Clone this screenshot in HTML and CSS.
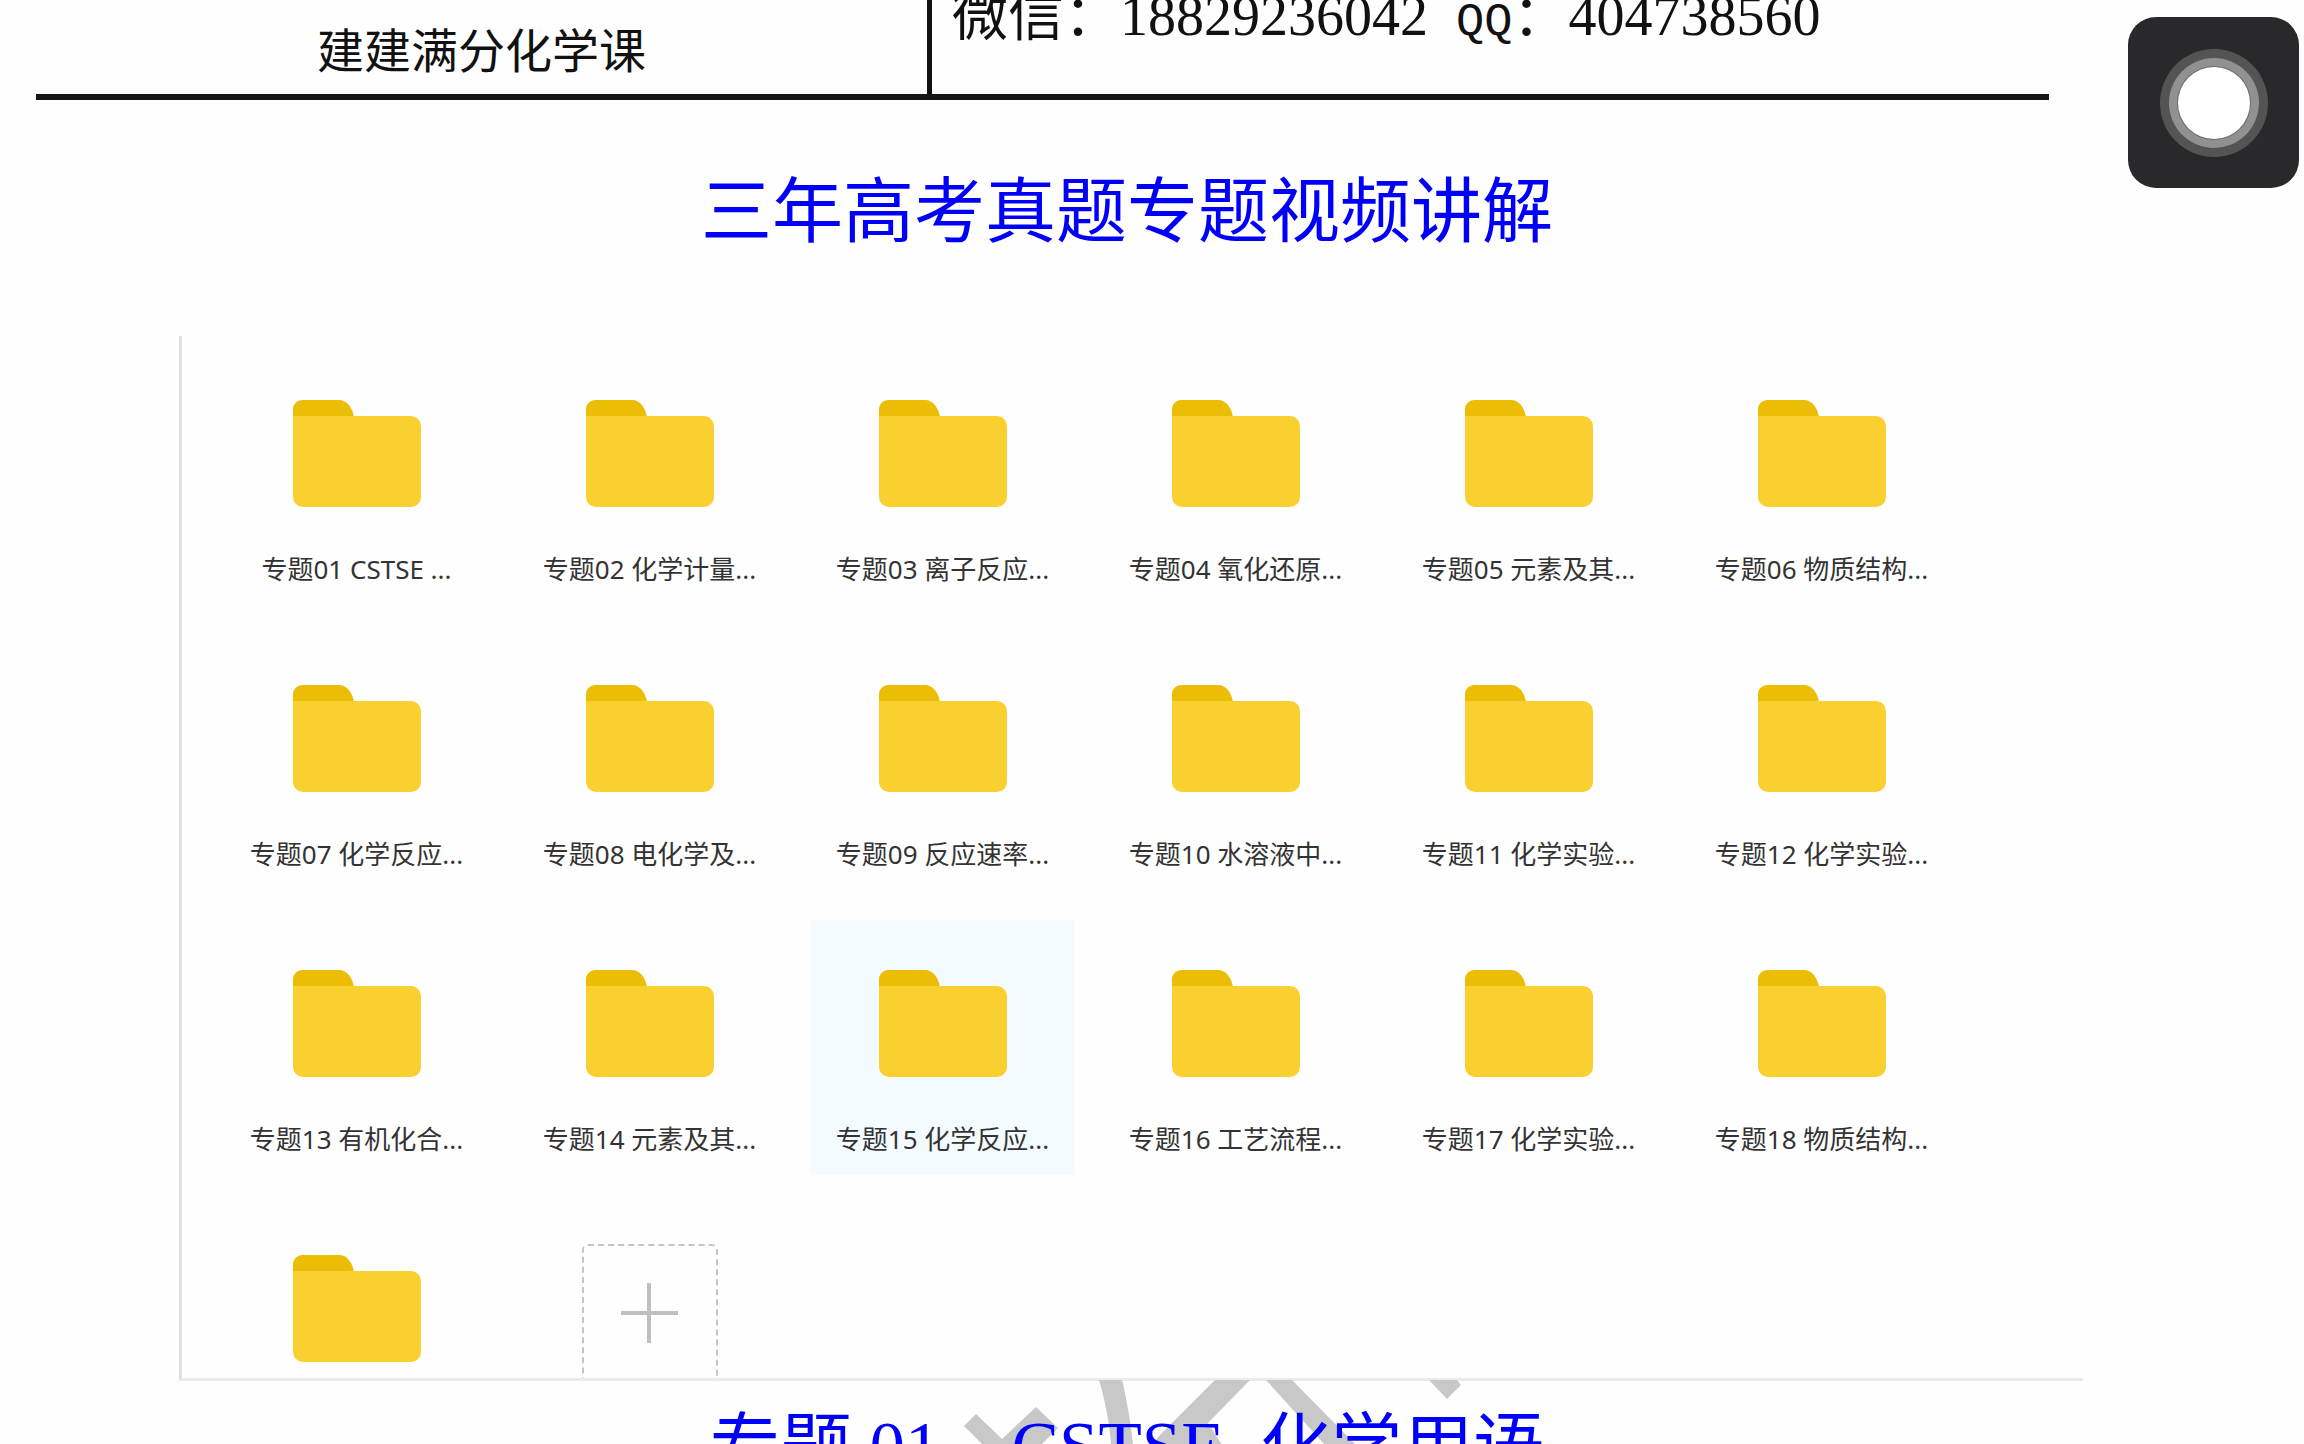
FILE: index.html
```html
<!DOCTYPE html>
<html lang="zh-CN">
<head>
<meta charset="utf-8">
<title>三年高考真题专题视频讲解</title>
<link rel="stylesheet" href="styles.css">
</head>
<body>
<svg class="symbols" aria-hidden="true">
  <symbol id="folder" viewBox="0 0 128 107">
    <path fill="#ebbd05" d="M0 24V9a9 9 0 0 1 9-9h37c8 0 14 8 15 18v6z"/>
    <path fill="#f9d030" d="M0 16h118a10 10 0 0 1 10 10v71a10 10 0 0 1-10 10H10a10 10 0 0 1-10-10z"/>
  </symbol>
</svg>
<div class="viewer">
  <header class="letterhead">
    <div class="course">建建满分化学课</div>
    <div class="contact">微信：18829236042  <span class="latin">QQ</span>：404738560</div>
  </header>
  <main class="page">
    <h1 class="title">三年高考真题专题视频讲解</h1>
    <section class="files">
      <button class="file"><svg class="icon"><use href="#folder"/></svg><span class="name">专题01 CSTSE ...</span></button>
      <button class="file"><svg class="icon"><use href="#folder"/></svg><span class="name">专题02 化学计量...</span></button>
      <button class="file"><svg class="icon"><use href="#folder"/></svg><span class="name">专题03 离子反应...</span></button>
      <button class="file"><svg class="icon"><use href="#folder"/></svg><span class="name">专题04 氧化还原...</span></button>
      <button class="file"><svg class="icon"><use href="#folder"/></svg><span class="name">专题05 元素及其...</span></button>
      <button class="file"><svg class="icon"><use href="#folder"/></svg><span class="name">专题06 物质结构...</span></button>
      <button class="file"><svg class="icon"><use href="#folder"/></svg><span class="name">专题07 化学反应...</span></button>
      <button class="file"><svg class="icon"><use href="#folder"/></svg><span class="name">专题08 电化学及...</span></button>
      <button class="file"><svg class="icon"><use href="#folder"/></svg><span class="name">专题09 反应速率...</span></button>
      <button class="file"><svg class="icon"><use href="#folder"/></svg><span class="name">专题10 水溶液中...</span></button>
      <button class="file"><svg class="icon"><use href="#folder"/></svg><span class="name">专题11 化学实验...</span></button>
      <button class="file"><svg class="icon"><use href="#folder"/></svg><span class="name">专题12 化学实验...</span></button>
      <button class="file"><svg class="icon"><use href="#folder"/></svg><span class="name">专题13 有机化合...</span></button>
      <button class="file"><svg class="icon"><use href="#folder"/></svg><span class="name">专题14 元素及其...</span></button>
      <button class="file selected"><svg class="icon"><use href="#folder"/></svg><span class="name">专题15 化学反应...</span></button>
      <button class="file"><svg class="icon"><use href="#folder"/></svg><span class="name">专题16 工艺流程...</span></button>
      <button class="file"><svg class="icon"><use href="#folder"/></svg><span class="name">专题17 化学实验...</span></button>
      <button class="file"><svg class="icon"><use href="#folder"/></svg><span class="name">专题18 物质结构...</span></button>
      <button class="file last" aria-label="文件夹"><svg class="icon"><use href="#folder"/></svg></button>
      <div class="slot">
        <button class="add" aria-label="新建">
          <svg class="plus" viewBox="0 0 57 60"><path d="M0 30h57M28 0v60" stroke="#bfbfbf" stroke-width="4"/></svg>
        </button>
      </div>
    </section>
    <div class="chapter">
      <svg class="watermark" viewBox="0 0 516 65" aria-hidden="true">
        <g fill="#c8c8c8">
          <path d="M0 46 12 34 38 59 72 27 94 48 77 65H19z"/>
          <path d="M135 0h23c5 20 9 45 11 65h-22c-1-20-6-45-12-65z"/>
          <path d="M251 0h35l-42 43 14 22h-65c-2-3-1-5 1-8z"/>
          <path d="M302 0h26l64 65h-31z"/>
          <path d="M465 0h28l4 5-14 14z"/>
        </g>
      </svg>
      <h2 class="subtitle">专题 01    CSTSE  化学用语</h2>
    </div>
  </main>
  <button class="assist" aria-label="辅助触控">
    <svg viewBox="0 0 171 171">
      <circle cx="86" cy="86" r="54" fill="#545455"/>
      <circle cx="86" cy="86" r="45" fill="#919191"/>
      <circle cx="86" cy="86" r="37" fill="#6c6c6c"/>
      <circle cx="86" cy="86" r="36" fill="#fff"/>
    </svg>
  </button>
</div>
</body>
</html>
```
FILE: styles.css
```css
* {
  box-sizing: border-box;
}

body {
  margin: 0;
  background: #fefefe;
  color: #111;
  font-family: "Liberation Serif", "Noto Sans CJK SC", serif;
}

button {
  margin: 0;
  padding: 0;
  border: 0;
  background: none;
  color: inherit;
  font: inherit;
}

.symbols {
  display: none;
}

.viewer {
  position: relative;
  height: 100vh;
  overflow: hidden;
}

/* Table head of the document, partly scrolled off the top */
.letterhead {
  display: grid;
  grid-template-columns: 896px 1fr;
  height: 112px;
  margin: -12px 255px 0 36px;
  border-bottom: 6px solid #151617;
  white-space: pre;
}

.course {
  padding-top: 40px;
  border-right: 5px solid #111;
  font-size: 47px;
  line-height: 48px;
  text-align: center;
}

.contact {
  padding-left: 20px;
  font-size: 56px;
  line-height: 56px;
}

.latin {
  font-family: "Liberation Mono", monospace;
  font-size: 47px;
  line-height: 48px;
}

.page {
  margin: 0 221px 0 179px;
}

.title,
.subtitle {
  margin: 0;
  padding-right: 8px;
  color: #0000fa;
  font-size: 71px;
  font-weight: 400;
  line-height: 72px;
  text-align: center;
  white-space: pre;
}

.title {
  padding-top: 76px;
}

.files {
  display: grid;
  grid-template-columns: repeat(6, 1fr);
  gap: 30px;
  height: 1045px;
  margin-top: 88px;
  padding: 14px 130px 0 43px;
  border-left: 3px solid #e0e0e0;
  border-bottom: 3px solid #ebebeb;
  overflow: hidden;
  align-content: start;
}

.file {
  display: flex;
  flex-direction: column;
  align-items: center;
  gap: 44px;
  height: 255px;
  padding-top: 50px;
}

.selected {
  background: #f3fbff;
}

.last {
  height: 174px;
}

.icon {
  width: 128px;
  height: 107px;
}

.name {
  color: #333;
  font-family: "Noto Sans", "Noto Sans CJK SC", sans-serif;
  font-size: 26px;
  line-height: 36px;
  white-space: nowrap;
}

.slot {
  display: flex;
  justify-content: center;
  padding-top: 39px;
}

.add {
  display: grid;
  place-items: center;
  width: 136px;
  height: 136px;
  border: 2px dashed #c4c4c4;
  border-bottom: 0;
  border-radius: 6px 6px 0 0;
}

.plus {
  width: 57px;
  height: 60px;
}

.chapter {
  position: relative;
  padding-top: 30px;
}

.watermark {
  position: absolute;
  top: -1px;
  left: 785px;
  width: 516px;
  height: 65px;
}

.subtitle {
  position: relative;
}

.assist {
  position: absolute;
  top: 17px;
  right: 5px;
  width: 171px;
  height: 171px;
  border-radius: 28px;
  background: #29292b;
}

.assist svg {
  display: block;
}
```
